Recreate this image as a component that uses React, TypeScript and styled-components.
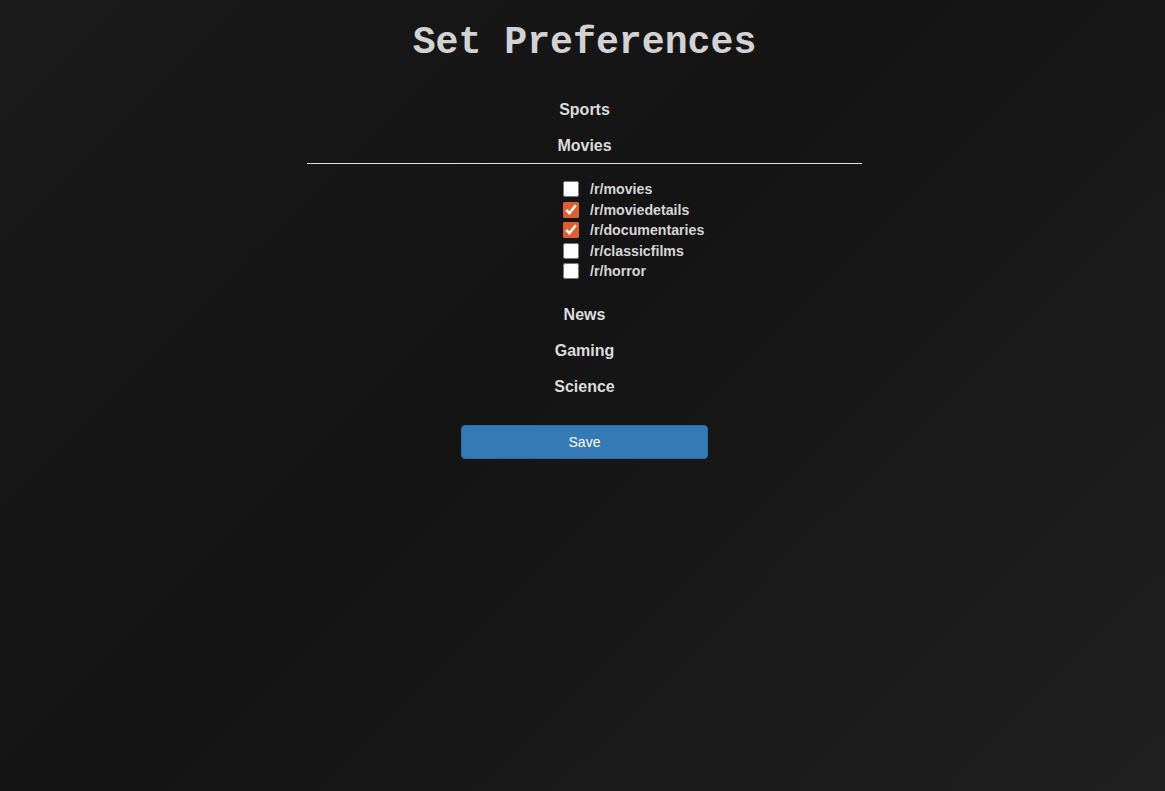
import React, { useState } from "react";
import styled, { createGlobalStyle } from "styled-components";

const Global = createGlobalStyle`
  html, body { margin: 0; padding: 0; height: 100%; }
  body {
    background: linear-gradient(135deg, #1a1a1a 0%, #141414 45%, #202020 100%);
    font-family: "Liberation Sans", Arial, sans-serif;
    color: #dcdcdc;
  }
  #root { min-height: 100vh; }
`;

const Page = styled.div`
  min-height: 791px;
  box-sizing: border-box;
  padding-left: 4px;
  display: flex;
  flex-direction: column;
  align-items: center;
`;

const Title = styled.h1`
  font-family: "Liberation Mono", "Courier New", monospace;
  font-weight: bold;
  font-size: 38.2px;
  color: #d2d2d2;
  margin: 21px 0 27px;
  line-height: 44px;
`;

const Categories = styled.div`
  width: 555px;
  display: flex;
  flex-direction: column;
  align-items: stretch;
`;

const Heading = styled.button<{ $open?: boolean }>`
  background: none;
  border: none;
  border-bottom: ${(p) => (p.$open ? "1px solid #e0e0e0" : "1px solid transparent")};
  color: #dcdcdc;
  font-family: "Liberation Sans", Arial, sans-serif;
  font-weight: bold;
  font-size: 16px;
  height: 36px;
  padding: 0;
  cursor: pointer;
`;

const List = styled.ul`
  list-style: none;
  margin: 0;
  padding: 15px 0 16px 256px;
  display: flex;
  flex-direction: column;
`;

const Item = styled.li`
  display: flex;
  align-items: center;
  height: 20.5px;
`;

const Check = styled.input`
  width: 16px;
  height: 16px;
  margin: 0 11px 0 0;
  accent-color: #e15d2c;
`;

const Label = styled.label`
  font-weight: bold;
  font-size: 14.2px;
  color: #d6d6d6;
`;

const SaveButton = styled.button`
  margin-top: 19px;
  width: 247px;
  height: 34px;
  background: #337ab7;
  border: 1px solid #2e6da4;
  border-radius: 4px;
  color: #fff;
  font-family: "Liberation Sans", Arial, sans-serif;
  font-size: 14px;
  cursor: pointer;
`;

const subs = [
  { name: "/r/movies", checked: false },
  { name: "/r/moviedetails", checked: true },
  { name: "/r/documentaries", checked: true },
  { name: "/r/classicfilms", checked: false },
  { name: "/r/horror", checked: false },
];

export default function App() {
  const [checks, setChecks] = useState(subs.map((s) => s.checked));
  return (
    <Page>
      <Global />
      <Title>Set Preferences</Title>
      <Categories>
        <Heading>Sports</Heading>
        <Heading $open>Movies</Heading>
        <List>
          {subs.map((s, i) => (
            <Item key={s.name}>
              <Check
                id={`s${i}`}
                type="checkbox"
                checked={checks[i]}
                onChange={() => setChecks(checks.map((c, j) => (j === i ? !c : c)))}
              />
              <Label htmlFor={`s${i}`}>{s.name}</Label>
            </Item>
          ))}
        </List>
        <Heading>News</Heading>
        <Heading>Gaming</Heading>
        <Heading>Science</Heading>
      </Categories>
      <SaveButton>Save</SaveButton>
    </Page>
  );
}
